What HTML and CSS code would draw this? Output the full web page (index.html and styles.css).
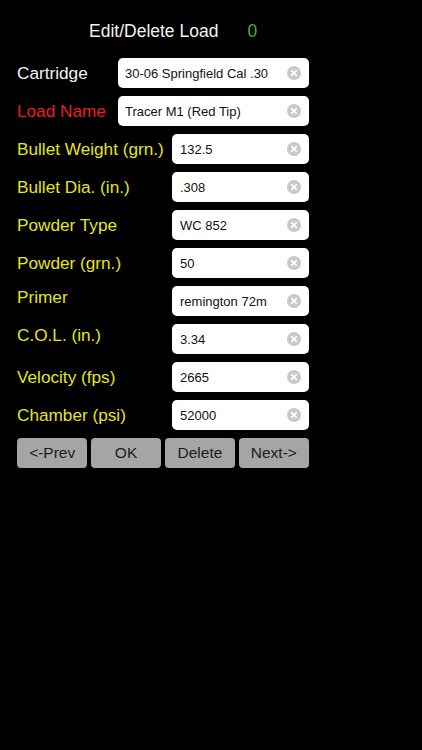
FILE: index.html
```html
<!DOCTYPE html>
<html lang="en">

<head>
	<meta charset="UTF-8">
	<meta name="viewport" content="width=device-width, initial-scale=1.0">
	<title>Edit/Delete Load</title>
	<link rel="stylesheet" href="styles.css">
</head>

<body>
	<div class="page">
		<div class="header">
			<span class="header-title">Edit/Delete Load</span>
			<span class="header-count">0</span>
		</div>

		<div class="load-form">
			<div class="row">
				<label class="row-label row-label-white">Cartridge</label>
				<div class="field field-wide">
					<input type="text" value="30-06 Springfield Cal .30" readonly />
					<span class="clear"><svg viewBox="0 0 14 14" width="14" height="14"><circle cx="7" cy="7" r="7" fill="#c8c8c8"/><path d="M4.6 4.6 L9.4 9.4 M9.4 4.6 L4.6 9.4" stroke="#fff" stroke-width="1.6" stroke-linecap="round"/></svg></span>
				</div>
			</div>
			<div class="row">
				<label class="row-label row-label-red">Load Name</label>
				<div class="field field-wide">
					<input type="text" value="Tracer M1 (Red Tip)" readonly />
					<span class="clear"><svg viewBox="0 0 14 14" width="14" height="14"><circle cx="7" cy="7" r="7" fill="#c8c8c8"/><path d="M4.6 4.6 L9.4 9.4 M9.4 4.6 L4.6 9.4" stroke="#fff" stroke-width="1.6" stroke-linecap="round"/></svg></span>
				</div>
			</div>
			<div class="row">
				<label class="row-label">Bullet Weight (grn.)</label>
				<div class="field">
					<input type="text" value="132.5" readonly />
					<span class="clear"><svg viewBox="0 0 14 14" width="14" height="14"><circle cx="7" cy="7" r="7" fill="#c8c8c8"/><path d="M4.6 4.6 L9.4 9.4 M9.4 4.6 L4.6 9.4" stroke="#fff" stroke-width="1.6" stroke-linecap="round"/></svg></span>
				</div>
			</div>
			<div class="row">
				<label class="row-label">Bullet Dia. (in.)</label>
				<div class="field">
					<input type="text" value=".308" readonly />
					<span class="clear"><svg viewBox="0 0 14 14" width="14" height="14"><circle cx="7" cy="7" r="7" fill="#c8c8c8"/><path d="M4.6 4.6 L9.4 9.4 M9.4 4.6 L4.6 9.4" stroke="#fff" stroke-width="1.6" stroke-linecap="round"/></svg></span>
				</div>
			</div>
			<div class="row">
				<label class="row-label">Powder Type</label>
				<div class="field">
					<input type="text" value="WC 852" readonly />
					<span class="clear"><svg viewBox="0 0 14 14" width="14" height="14"><circle cx="7" cy="7" r="7" fill="#c8c8c8"/><path d="M4.6 4.6 L9.4 9.4 M9.4 4.6 L4.6 9.4" stroke="#fff" stroke-width="1.6" stroke-linecap="round"/></svg></span>
				</div>
			</div>
			<div class="row">
				<label class="row-label">Powder (grn.)</label>
				<div class="field">
					<input type="text" value="50" readonly />
					<span class="clear"><svg viewBox="0 0 14 14" width="14" height="14"><circle cx="7" cy="7" r="7" fill="#c8c8c8"/><path d="M4.6 4.6 L9.4 9.4 M9.4 4.6 L4.6 9.4" stroke="#fff" stroke-width="1.6" stroke-linecap="round"/></svg></span>
				</div>
			</div>
			<div class="row">
				<label class="row-label row-label-raised">Primer</label>
				<div class="field">
					<input type="text" value="remington 72m" readonly />
					<span class="clear"><svg viewBox="0 0 14 14" width="14" height="14"><circle cx="7" cy="7" r="7" fill="#c8c8c8"/><path d="M4.6 4.6 L9.4 9.4 M9.4 4.6 L4.6 9.4" stroke="#fff" stroke-width="1.6" stroke-linecap="round"/></svg></span>
				</div>
			</div>
			<div class="row">
				<label class="row-label row-label-raised">C.O.L. (in.)</label>
				<div class="field">
					<input type="text" value="3.34" readonly />
					<span class="clear"><svg viewBox="0 0 14 14" width="14" height="14"><circle cx="7" cy="7" r="7" fill="#c8c8c8"/><path d="M4.6 4.6 L9.4 9.4 M9.4 4.6 L4.6 9.4" stroke="#fff" stroke-width="1.6" stroke-linecap="round"/></svg></span>
				</div>
			</div>
			<div class="row">
				<label class="row-label">Velocity (fps)</label>
				<div class="field">
					<input type="text" value="2665" readonly />
					<span class="clear"><svg viewBox="0 0 14 14" width="14" height="14"><circle cx="7" cy="7" r="7" fill="#c8c8c8"/><path d="M4.6 4.6 L9.4 9.4 M9.4 4.6 L4.6 9.4" stroke="#fff" stroke-width="1.6" stroke-linecap="round"/></svg></span>
				</div>
			</div>
			<div class="row">
				<label class="row-label">Chamber (psi)</label>
				<div class="field">
					<input type="text" value="52000" readonly />
					<span class="clear"><svg viewBox="0 0 14 14" width="14" height="14"><circle cx="7" cy="7" r="7" fill="#c8c8c8"/><path d="M4.6 4.6 L9.4 9.4 M9.4 4.6 L4.6 9.4" stroke="#fff" stroke-width="1.6" stroke-linecap="round"/></svg></span>
				</div>
			</div>

			<div class="btn-row">
				<button>&lt;-Prev</button>
				<button>OK</button>
				<button>Delete</button>
				<button>Next-&gt;</button>
			</div>
		</div>
	</div>
</body>

</html>
```

FILE: styles.css
```css
* {
	margin: 0;
	padding: 0;
	box-sizing: border-box;
	font-family: 'Liberation Sans', Arial, Helvetica, sans-serif;
}

body {
	background: #000;
	width: 422px;
	height: 750px;
}

.page {
	width: 309px;
	padding-left: 17px;
}

.header {
	display: flex;
	align-items: center;
	height: 58px;
	padding-top: 4px;
	padding-left: 72px;
}

.header-title {
	font-size: 17.5px;
	color: #f2f2f2;
}

.header-count {
	margin-left: 29px;
	font-size: 17.5px;
	color: #3db23f;
}

.load-form {
	display: grid;
	gap: 8px;
}

.row {
	display: flex;
	align-items: center;
	justify-content: space-between;
	height: 30px;
}

.row-label {
	font-size: 17.2px;
	color: #e6e41f;
	white-space: nowrap;
}

.row-label-white {
	color: #f4f4f4;
}

.row-label-red {
	color: #e8201b;
}

.row-label-raised {
	margin-top: -8px;
}

.field {
	position: relative;
	width: 137px;
	height: 30px;
}

.field-wide {
	width: 191px;
}

.field input {
	width: 100%;
	height: 30px;
	border: 0;
	outline: 0;
	border-radius: 5px;
	background: #fff;
	padding: 0 28px 0 8px;
	font-size: 13px;
	color: #111;
}

.field-wide input {
	padding-left: 7px;
}

.clear {
	position: absolute;
	right: 8px;
	top: 8px;
	width: 14px;
	height: 14px;
	line-height: 0;
}

.btn-row {
	display: grid;
	grid-template-columns: repeat(4, 1fr);
	gap: 3.5px;
	height: 30px;
}

.btn-row button {
	height: 30px;
	border: 0;
	border-radius: 4px;
	background: #a5a5a5;
	color: #1c1c1c;
	font-size: 15.5px;
	cursor: pointer;
}
```
